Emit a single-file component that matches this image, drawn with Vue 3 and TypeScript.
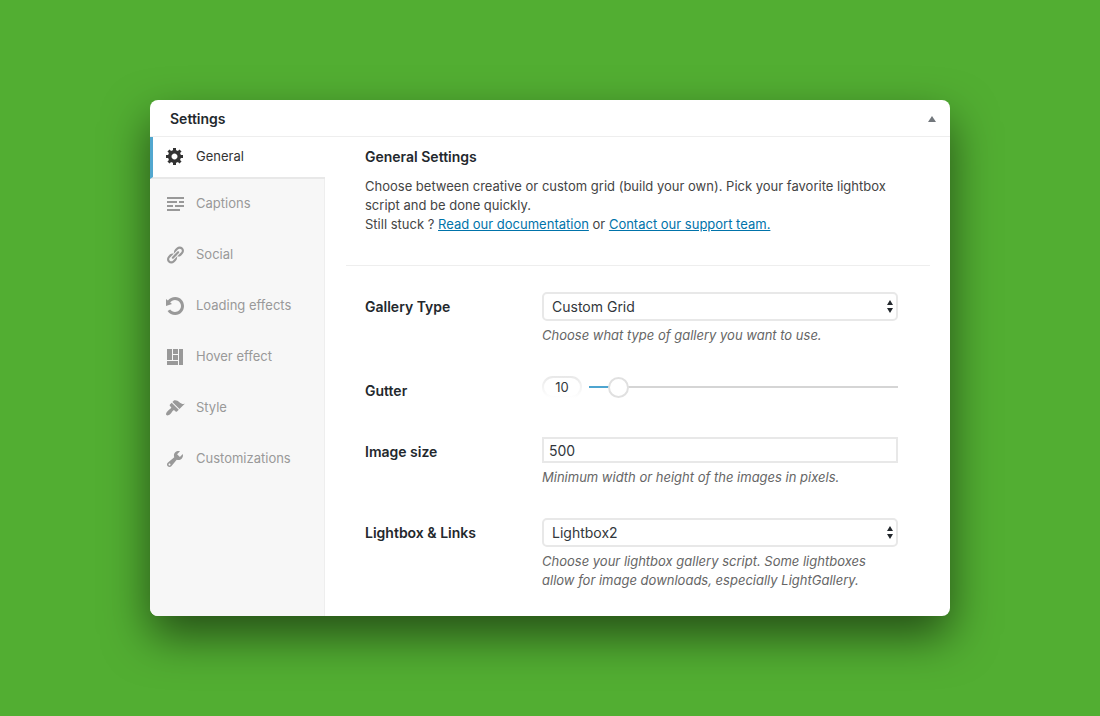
<script setup lang="ts">
import { computed, ref } from 'vue'

interface Tab {
  label: string
  path: string
}

const tabs: Tab[] = [
  {
    label: 'General',
    path: 'M18 12h-2.18c-.17.7-.44 1.35-.81 1.93l1.54 1.54-2.1 2.1-1.54-1.54c-.58.36-1.23.63-1.91.79V19H8v-2.18c-.68-.16-1.33-.43-1.91-.79l-1.54 1.54-2.12-2.12 1.54-1.54c-.36-.58-.63-1.23-.79-1.91H1V9.03h2.17c.16-.7.44-1.35.8-1.94L2.43 5.55l2.1-2.1 1.54 1.54c.58-.37 1.24-.64 1.93-.81V2h3v2.18c.68.16 1.33.43 1.91.79l1.54-1.54 2.12 2.12-1.54 1.54c.36.59.64 1.24.8 1.94H18V12zm-8.5 1.5c1.66 0 3-1.34 3-3s-1.34-3-3-3-3 1.34-3 3 1.34 3 3 3z',
  },
  {
    label: 'Captions',
    path: 'M2 3h17v2H2zM2 7h10v2H2zM14 7h5v2h-5zM2 11h6v2H2zM10 11h9v2h-9zM2 15h13v2H2z',
  },
  {
    label: 'Social',
    path: 'M17.74 2.76c1.68 1.69 1.68 4.41 0 6.1l-1.53 1.52c-1.12 1.12-2.7 1.47-4.14 1.09l2.62-2.61.76-.77.76-.76c.84-.84.84-2.2 0-3.04-.84-.85-2.2-.85-3.04 0l-.77.76-3.38 3.38c-.37-1.44-.02-3.02 1.1-4.14l1.52-1.53c1.69-1.68 4.42-1.68 6.1 0zM8.59 13.43l5.34-5.34c.42-.42.42-1.1 0-1.52-.44-.43-1.13-.39-1.53 0l-5.33 5.34c-.42.42-.42 1.1 0 1.52.44.43 1.13.39 1.52 0zm-.76 2.29l4.14-4.15c.38 1.44.03 3.02-1.09 4.14l-1.52 1.53c-1.69 1.68-4.41 1.68-6.1 0-1.68-1.68-1.68-4.42 0-6.1l1.53-1.52c1.12-1.12 2.7-1.47 4.14-1.1l-4.14 4.15c-.85.84-.85 2.2 0 3.05.84.84 2.2.84 3.04 0z',
  },
  {
    label: 'Loading effects',
    path: 'M10.25 1.02c5.1 0 8.75 4.04 8.75 9s-3.65 9-8.75 9c-3.2 0-6.02-1.59-7.68-3.99l2.59-1.52c1.1 1.5 2.86 2.51 4.84 2.51 3.3 0 6-2.79 6-6s-2.7-6-6-6c-1.97 0-3.72 1-4.82 2.49L7 8.02l-6 2v-7L2.89 4.6c1.69-2.17 4.36-3.58 7.36-3.58z',
  },
  {
    label: 'Hover effect',
    path: 'M2 2h5v11H2V2zm6 0h5v5H8V2zm6 0h4v16h-4V2zM8 8h5v5H8V8zm-6 6h11v4H2v-4z',
  },
  {
    label: 'Style',
    path: 'M14.48 11.06L7.41 3.99l1.5-1.5c.5-.56 2.3-.47 3.51.32 1.21.8 1.43 1.28 2.91 2.1 1.18.64 2.45 1.26 4.45.85zm-.71.71L6.7 4.7 4.93 6.47c-.39.39-.39 1.02 0 1.41l1.06 1.06c.39.39.39 1.03 0 1.42-.6.6-1.43 1.11-2.21 1.69-.35.26-.7.53-1.01.84C1.43 14.23.4 16.08 1.4 17.07c.99 1 2.84-.03 4.18-1.36.31-.31.58-.66.85-1.02.57-.78 1.08-1.61 1.69-2.21.39-.39 1.02-.39 1.41 0l1.06 1.06c.39.39 1.02.39 1.41 0z',
  },
  {
    label: 'Customizations',
    path: 'M16.68 9.77c-1.34 1.34-3.3 1.67-4.95.99l-5.41 6.52c-.99.99-2.59.99-3.58 0s-.99-2.59 0-3.57l6.52-5.42c-.68-1.65-.35-3.61.99-4.95 1.28-1.28 3.12-1.62 4.72-1.06l-2.89 2.89 2.82 2.82 2.86-2.87c.53 1.58.18 3.39-1.08 4.65zM3.81 16.21c.4.39 1.04.39 1.43 0 .4-.4.4-1.04 0-1.43-.39-.4-1.03-.4-1.43 0-.39.39-.39 1.03 0 1.43z',
  },
]

const activeTab = ref('General')
const galleryType = ref('Custom Grid')
const gutter = ref(10)
const gutterMax = 150
const imageSize = ref('500')
const lightbox = ref('Lightbox2')

const gutterFill = computed(() => `${(gutter.value / gutterMax) * 100}%`)
</script>

<template>
  <div class="page">
    <section class="card">
      <header class="card-header">
        <h1>Settings</h1>
        <button class="toggle" type="button" aria-label="Toggle panel">
          <svg width="8" height="6" viewBox="0 0 8 6"><path d="M4 0l4 6H0z" /></svg>
        </button>
      </header>

      <div class="card-body">
        <nav class="tabs">
          <button
            v-for="tab in tabs"
            :key="tab.label"
            type="button"
            class="tab"
            :class="{ active: tab.label === activeTab }"
            @click="activeTab = tab.label"
          >
            <svg class="tab-icon" viewBox="0 0 20 20"><path :d="tab.path" /></svg>
            <span>{{ tab.label }}</span>
          </button>
        </nav>

        <main class="content">
          <div class="intro">
            <h2>General Settings</h2>
            <p>
              Choose between creative or custom grid (build your own). Pick your favorite lightbox
              script and be done quickly.<br />
              Still stuck ? <a href="#documentation">Read our documentation</a> or
              <a href="#support">Contact our support team.</a>
            </p>
          </div>

          <form class="form" @submit.prevent>
            <div class="row">
              <label for="gallery-type">Gallery Type</label>
              <div class="field">
                <div class="select">
                  <select id="gallery-type" v-model="galleryType">
                    <option>Custom Grid</option>
                    <option>Creative Gallery</option>
                  </select>
                  <svg class="arrows" viewBox="0 0 6 13"><path d="M3 0l3 5H0zM3 13l3-5H0z" /></svg>
                </div>
                <p class="help">Choose what type of gallery you want to use.</p>
              </div>
            </div>

            <div class="row">
              <label for="gutter">Gutter</label>
              <div class="field slider">
                <input v-model.number="gutter" class="value" type="text" aria-label="Gutter value" />
                <input
                  id="gutter"
                  v-model.number="gutter"
                  class="range"
                  type="range"
                  min="0"
                  :max="gutterMax"
                  :style="{ '--fill': gutterFill }"
                />
              </div>
            </div>

            <div class="row">
              <label for="image-size">Image size</label>
              <div class="field">
                <input id="image-size" v-model="imageSize" class="text" type="text" />
                <p class="help">Minimum width or height of the images in pixels.</p>
              </div>
            </div>

            <div class="row">
              <label for="lightbox">Lightbox &amp; Links</label>
              <div class="field">
                <div class="select">
                  <select id="lightbox" v-model="lightbox">
                    <option>Lightbox2</option>
                    <option>LightGallery</option>
                  </select>
                  <svg class="arrows" viewBox="0 0 6 13"><path d="M3 0l3 5H0zM3 13l3-5H0z" /></svg>
                </div>
                <p class="help">
                  Choose your lightbox gallery script. Some lightboxes allow for image downloads,
                  especially LightGallery.
                </p>
              </div>
            </div>
          </form>
        </main>
      </div>
    </section>
  </div>
</template>

<style>
body {
  margin: 0;
  background: #52ae32;
}
</style>

<style scoped>
.page {
  box-sizing: border-box;
  min-height: 100vh;
  padding: 100px 150px;
  background: #52ae32;
  color: #444;
  font-family: Inter, "Liberation Sans", sans-serif;
  font-size: 13px;
  line-height: 19px;
}

h1,
h2,
p {
  margin: 0;
}

button,
input,
select {
  box-sizing: border-box;
  margin: 0;
  font: inherit;
}

.card {
  display: flex;
  flex-direction: column;
  min-height: calc(100vh - 200px);
  border-radius: 8px;
  background: #fff;
  box-shadow: 0 20px 46px rgba(0, 0, 0, 0.55);
}

.card-header {
  display: flex;
  align-items: center;
  justify-content: space-between;
  padding: 9px 9px 8px 20px;
  border-bottom: 1px solid #eee;
}

h1,
h2,
.row > label {
  color: #23282d;
  font-size: 14px;
  font-weight: 600;
  line-height: 19px;
}

.toggle {
  display: flex;
  padding: 5px;
  border: 0;
  background: none;
}

.toggle path {
  fill: #72777c;
}

.card-body {
  display: flex;
  flex: 1;
}

.tabs {
  display: flex;
  flex: none;
  flex-direction: column;
  box-sizing: border-box;
  width: 175px;
  border-right: 1px solid #eee;
  border-bottom-left-radius: 8px;
  background: #f7f7f7;
}

.tab {
  display: flex;
  align-items: center;
  gap: 11px;
  height: 51px;
  padding: 0 0 2px 15px;
  border: 0;
  background: none;
  color: #999;
  text-align: left;
}

.tab.active {
  height: 42px;
  margin-right: -1px;
  padding-left: 12px;
  border-bottom: 2px solid #e8e8e8;
  border-left: 3px solid #52a7cf;
  background: #fff;
  color: #333;
}

.tab-icon {
  width: 20px;
  height: 20px;
  fill: currentColor;
}

.content {
  flex: 1;
  padding: 10px 20px 25px 21px;
}

.intro {
  padding: 0 20px 31px 19px;
  border-bottom: 1px solid #eee;
}

.intro p {
  margin-top: 11px;
}

a {
  color: #0073aa;
}

.form {
  display: flex;
  flex-direction: column;
  gap: 31px;
  padding: 26px 32px 0 19px;
}

.row {
  display: grid;
  grid-template-columns: 177px 1fr;
}

.row > label {
  padding-top: 5px;
}

.select {
  position: relative;
}

.select select {
  display: block;
  width: 100%;
  height: 29px;
  padding: 0 24px 0 8px;
  border: 2px solid #e8e8e8;
  border-radius: 5px;
  appearance: none;
  background: #fff;
  color: #32373c;
  font-size: 14px;
}

.arrows {
  position: absolute;
  top: 8px;
  right: 5px;
  width: 6px;
  height: 13px;
  fill: #23282d;
  pointer-events: none;
}

.help {
  padding-top: 5px;
  color: #666;
  font-style: italic;
}

.slider {
  display: flex;
  align-items: flex-start;
  gap: 7px;
  padding-bottom: 8px;
}

.value {
  width: 40px;
  height: 22px;
  padding: 0;
  border: 2px solid transparent;
  border-radius: 11px;
  background:
    linear-gradient(#fff, #fff) padding-box,
    linear-gradient(#e8e8e8, #fff) border-box;
  color: #32373c;
  text-align: center;
}

.range {
  flex: 1;
  min-width: 0;
  height: 22px;
  appearance: none;
  background: linear-gradient(to right, #4ea5d0 var(--fill), #d5d5d5 var(--fill)) center / 100% 2px no-repeat;
}

.range::-webkit-slider-thumb {
  box-sizing: border-box;
  width: 21px;
  height: 21px;
  border: 2px solid #e0e0e0;
  border-radius: 50%;
  appearance: none;
  background: #fff;
}

.text {
  display: block;
  width: 100%;
  height: 26px;
  padding: 0 5px;
  border: 2px solid #e8e8e8;
  background: #fff;
  color: #32373c;
  font-size: 14px;
}
</style>
